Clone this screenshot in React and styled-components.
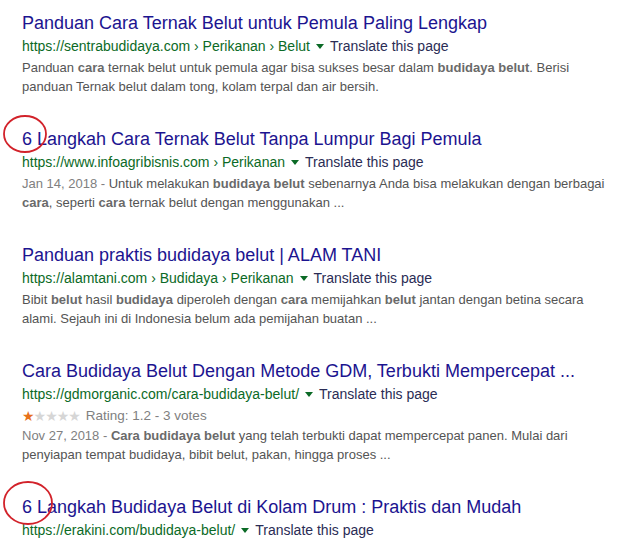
import styled, { createGlobalStyle } from "styled-components";

const GlobalStyle = createGlobalStyle`
	html, body {
		margin: 0;
		padding: 0;
		background: #fff;
	}
	body {
		font-family: "Liberation Sans", Arial, sans-serif;
	}
`;

const Page = styled.div`
	padding: 12px 0 0 22px;
	width: 588px;
`;

const Result = styled.div`
	position: relative;
	margin-bottom: 32px;
	&:last-child {
		margin-bottom: 0;
	}
`;

const Title = styled.a`
	display: block;
	font-size: 18px;
	line-height: 22px;
	color: #1c1490;
	text-decoration: none;
	white-space: nowrap;
`;

const UrlRow = styled.div`
	display: flex;
	align-items: center;
	font-size: 14px;
	line-height: 24px;
	white-space: nowrap;
`;

const Cite = styled.span`
	color: #0b6a26;
`;

const Caret = styled.svg`
	width: 8px;
	height: 5px;
	margin: 0 6px 0 6px;
	fill: #0b6a26;
`;

const Translate = styled.span`
	color: #2a2c55;
`;

const RatingRow = styled.div`
	display: flex;
	align-items: center;
	font-size: 13px;
	line-height: 20px;
	color: #808080;
`;

const Star = styled.span`
	color: ${({ $on }) => ($on ? "#e7711b" : "#d6d6d6")};
	font-size: 14px;
	font-family: "DejaVu Sans", sans-serif;
	letter-spacing: -1px;
`;

const RatingText = styled.span`
	margin-left: 6px;
	font-size: 13.5px;
`;

const Snippet = styled.div`
	font-size: 13px;
	line-height: 19px;
	color: #545454;
	b {
		color: #6a6a6a;
		font-weight: bold;
	}
`;

const Date = styled.span`
	color: #808080;
`;

const Circle = styled.svg`
	position: absolute;
	left: ${({ $x }) => $x}px;
	top: ${({ $y }) => $y}px;
	width: ${({ $w }) => $w}px;
	height: ${({ $h }) => $h}px;
	overflow: visible;
	pointer-events: none;
`;

const Mark = ({ x, y, w, h }) => (
	<Circle $x={x} $y={y} $w={w} $h={h} viewBox={`0 0 ${w} ${h}`}>
		<ellipse
			cx={w / 2}
			cy={h / 2}
			rx={w / 2 - 1}
			ry={h / 2 - 1}
			fill="none"
			stroke="#d2222a"
			strokeWidth="1.8"
		/>
	</Circle>
);

const UrlLine = ({ children }) => (
	<UrlRow>
		<Cite>{children}</Cite>
		<Caret viewBox="0 0 8 5">
			<path d="M0 0 L8 0 L4 5 Z" />
		</Caret>
		<Translate>Translate this page</Translate>
	</UrlRow>
);

const App = () => {
	return (
		<Page>
			<GlobalStyle />
			<Result>
				<Title>Panduan Cara Ternak Belut untuk Pemula Paling Lengkap</Title>
				<UrlLine>https://sentrabudidaya.com › Perikanan › Belut</UrlLine>
				<Snippet>
					Panduan <b>cara</b> ternak belut untuk pemula agar bisa sukses besar dalam{" "}
					<b>budidaya belut</b>. Berisi panduan Ternak belut dalam tong, kolam terpal dan
					air bersih.
				</Snippet>
			</Result>
			<Result>
				<Mark x={-19} y={-13} w={44} h={38} />
				<Title>6 Langkah Cara Ternak Belut Tanpa Lumpur Bagi Pemula</Title>
				<UrlLine>https://www.infoagribisnis.com › Perikanan</UrlLine>
				<Snippet>
					<Date>Jan 14, 2018 - </Date>Untuk melakukan <b>budidaya belut</b> sebenarnya
					Anda bisa melakukan dengan berbagai <b>cara</b>, seperti <b>cara</b> ternak belut
					dengan menggunakan ...
				</Snippet>
			</Result>
			<Result>
				<Title>Panduan praktis budidaya belut | ALAM TANI</Title>
				<UrlLine>https://alamtani.com › Budidaya › Perikanan</UrlLine>
				<Snippet>
					Bibit <b>belut</b> hasil <b>budidaya</b> diperoleh dengan <b>cara</b> memijahkan{" "}
					<b>belut</b> jantan dengan betina secara alami. Sejauh ini di Indonesia belum ada
					pemijahan buatan ...
				</Snippet>
			</Result>
			<Result>
				<Title>Cara Budidaya Belut Dengan Metode GDM, Terbukti Mempercepat ...</Title>
				<UrlLine>https://gdmorganic.com/cara-budidaya-belut/</UrlLine>
				<RatingRow>
					<Star $on>★</Star>
					<Star>★</Star>
					<Star>★</Star>
					<Star>★</Star>
					<Star>★</Star>
					<RatingText>Rating: 1.2 - 3 votes</RatingText>
				</RatingRow>
				<Snippet>
					<Date>Nov 27, 2018 - </Date>
					<b>Cara budidaya belut</b> yang telah terbukti dapat mempercepat panen. Mulai dari
					penyiapan tempat budidaya, bibit belut, pakan, hingga proses ...
				</Snippet>
			</Result>
			<Result>
				<Mark x={-19} y={-15} w={50} h={44} />
				<Title>6 Langkah Budidaya Belut di Kolam Drum : Praktis dan Mudah</Title>
				<UrlLine>https://erakini.com/budidaya-belut/</UrlLine>
			</Result>
		</Page>
	);
};

export default App;
